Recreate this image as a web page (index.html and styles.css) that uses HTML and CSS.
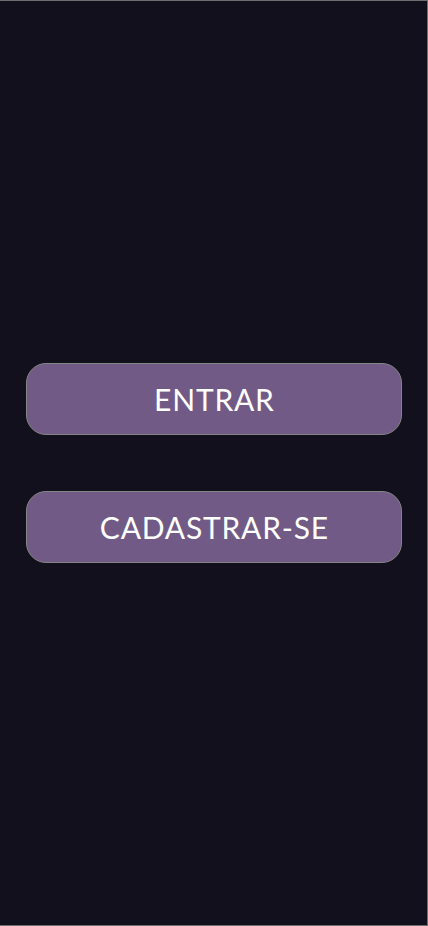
FILE: index.html
```html
<!DOCTYPE html>
<html lang="pt-BR">
<head>
<meta charset="utf-8">
<title>Início</title>
<link rel="stylesheet" href="styles.css">
</head>
<body>
<main class="screen">
  <div class="actions">
    <button class="btn">ENTRAR</button>
    <button class="btn">CADASTRAR-SE</button>
  </div>
</main>
</body>
</html>
```
FILE: styles.css
```css
* { box-sizing: border-box; }
html, body { margin: 0; padding: 0; }
body { background: #13101e; }
.screen {
  height: 926px;
  border: 1px solid #6e6e6e;
  border-left: none;
  display: flex;
  align-items: center;
  justify-content: center;
  padding: 0 25px 0 26px;
}
.actions {
  width: 100%;
  display: flex;
  flex-direction: column;
  gap: 56px;
}
.btn {
  height: 72px;
  width: 100%;
  background: #715a85;
  border: 1px solid #858585;
  border-radius: 20px;
  color: #ffffff;
  font-family: "Lato", "Open Sans", sans-serif;
  font-size: 30px;
  font-weight: 400;
  letter-spacing: 0.8px;
  text-indent: 0.8px;
  padding: 0;
}
```
